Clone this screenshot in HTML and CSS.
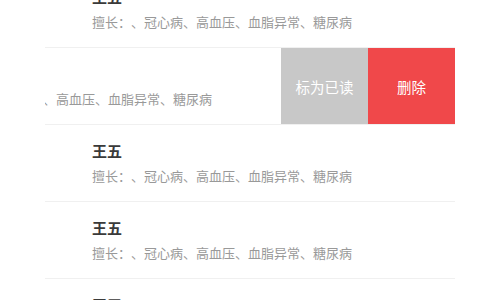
FILE: index.html
```html
<!DOCTYPE html>
<html lang="zh-CN">
<head>
<meta charset="utf-8">
<link rel="stylesheet" href="styles.css">
</head>
<body>
<ul class="list">
  <li class="row">
    <div class="content">
      <div class="name">王五</div>
      <div class="desc">擅长：、冠心病、高血压、血脂异常、糖尿病</div>
    </div>
  </li>
  <li class="row swiped">
    <div class="content">
      <div class="name">王五</div>
      <div class="desc">擅长：、冠心病、高血压、血脂异常、糖尿病</div>
    </div>
    <div class="actions">
      <div class="btn btn-read">标为已读</div>
      <div class="btn btn-del">删除</div>
    </div>
  </li>
  <li class="row">
    <div class="content">
      <div class="name">王五</div>
      <div class="desc">擅长：、冠心病、高血压、血脂异常、糖尿病</div>
    </div>
  </li>
  <li class="row">
    <div class="content">
      <div class="name">王五</div>
      <div class="desc">擅长：、冠心病、高血压、血脂异常、糖尿病</div>
    </div>
  </li>
  <li class="row">
    <div class="content">
      <div class="name">王五</div>
      <div class="desc">擅长：、冠心病、高血压、血脂异常、糖尿病</div>
    </div>
  </li>
</ul>
</body>
</html>
```
FILE: styles.css
```css
html, body {
  margin: 0;
  padding: 0;
  background: #fff;
  overflow: hidden;
}
body {
  font-family: "Noto Sans CJK SC", "Noto Sans", sans-serif;
  text-spacing-trim: space-all;
  font-feature-settings: "fwid" 1;
}
.list {
  list-style: none;
  margin: -29px 25px 0 45px;
  padding: 0;
}
.row {
  position: relative;
  height: 76px;
  border-bottom: 1px solid #f0f0f0;
  overflow: hidden;
}
.content {
  height: 100%;
  box-sizing: border-box;
  padding: 15px 0 0 47px;
  background: #fff;
  white-space: nowrap;
}
.swiped .content {
  transform: translateX(-140px);
}
.name {
  font-size: 15px;
  line-height: 22px;
  font-weight: bold;
  color: #3a3a3a;
}
.desc {
  margin-top: 4px;
  font-size: 13px;
  line-height: 20px;
  color: #999;
}
.actions {
  position: absolute;
  top: 0;
  right: 0;
  bottom: -1px;
  display: flex;
}
.btn {
  width: 87px;
  display: flex;
  align-items: center;
  justify-content: center;
  color: #fff;
  font-size: 14.5px;
}
.btn-read {
  background: #c8c8c8;
}
.btn-del {
  background: #f0484a;
}
```
